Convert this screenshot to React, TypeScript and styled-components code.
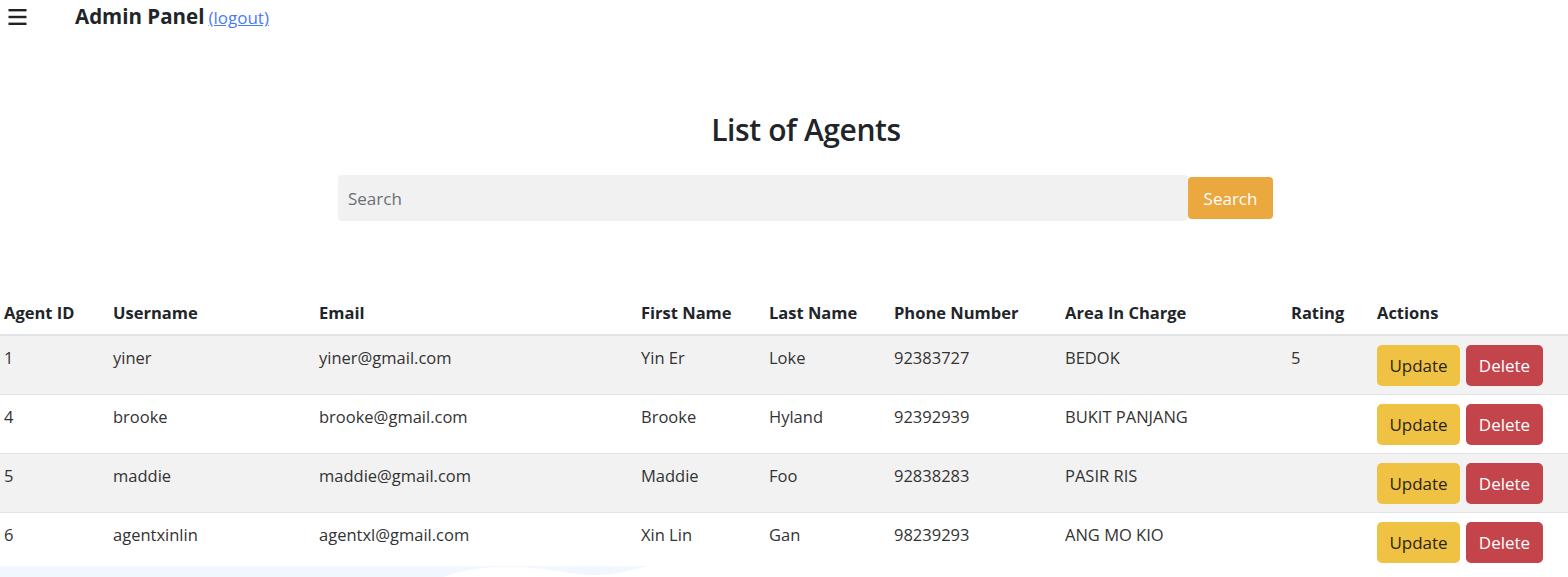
import React from "react";
import styled, { createGlobalStyle } from "styled-components";

const Global = createGlobalStyle`
  html, body { margin: 0; padding: 0; background: #fff; }
  body {
    font-family: "Open Sans", "Noto Sans", "Liberation Sans", sans-serif;
    color: #212529;
    font-size: 16px;
    overflow: hidden;
  }
  * { box-sizing: border-box; }
`;

const Page = styled.div`
  position: relative;
  width: 1568px;
  height: 577px;
  overflow: hidden;
`;

const Backdrop = styled.svg`
  position: absolute;
  left: 0;
  bottom: 0;
  z-index: 0;
`;

const Content = styled.div`
  position: relative;
  z-index: 1;
  display: flex;
  flex-direction: column;
`;

const NavBar = styled.header`
  display: flex;
  align-items: flex-start;
  height: 38px;
  padding: 0 8px;
`;

const MenuButton = styled.button`
  border: 0;
  background: none;
  padding: 0;
  margin-top: 8px;
  width: 19px;
  height: 18px;
  display: block;
  cursor: pointer;
`;

const Brand = styled.div`
  margin-left: 48px;
  padding-top: 2px;
  display: flex;
  align-items: baseline;
  gap: 4px;
  line-height: 28px;
`;

const BrandTitle = styled.span`
  font-size: 20.5px;
  font-weight: 700;
`;

const LogoutLink = styled.a`
  font-size: 17px;
  color: #4a7cf6;
  text-decoration: underline;
`;

const Heading = styled.section`
  display: flex;
  flex-direction: column;
  align-items: center;
  padding-left: 44px;
`;

const Title = styled.h2`
  margin: 72px 0 0;
  font-size: 30px;
  font-weight: 600;
  line-height: 40px;
  letter-spacing: -0.4px;
`;

const SearchRow = styled.form`
  display: flex;
  align-items: center;
  margin: 25px 0 0 -1px;
`;

const SearchInput = styled.input`
  width: 850px;
  height: 46px;
  border: 0;
  border-radius: 4px;
  background: #f1f1f1;
  padding: 0 10px;
  font-family: inherit;
  font-size: 17px;
  color: #212529;
  &::placeholder { color: #6c6f73; }
  &:focus { outline: none; }
`;

const SearchButton = styled.button`
  width: 85px;
  height: 42px;
  border: 0;
  border-radius: 4px;
  background: #eba83e;
  color: #fff;
  font-family: inherit;
  font-size: 17px;
`;

const Table = styled.table`
  margin-top: 70px;
  width: 1568px;
  border-collapse: collapse;
  table-layout: fixed;
`;

const Th = styled.th`
  text-align: left;
  font-weight: 700;
  font-size: 16.5px;
  padding: 10px 4px 9px;
  line-height: 24px;
  border-bottom: 2px solid #e2e3e5;
  white-space: nowrap;
`;

const Tr = styled.tr<{ $striped: boolean }>`
  background: ${(p) => (p.$striped ? "#f2f2f2" : "transparent")};
  border-bottom: 1px solid #e2e3e5;
  &:last-child { border-bottom: 0; }
`;

const Td = styled.td`
  padding: 9px 4px 8px;
  vertical-align: top;
  font-size: 16.5px;
  line-height: 26px;
  color: #333;
  white-space: nowrap;
`;

const Actions = styled.div`
  display: flex;
  gap: 6px;
`;

const ActionButton = styled.button<{ $variant: "update" | "delete" }>`
  height: 41px;
  padding: 0 12px;
  border: 0;
  border-radius: 5px;
  font-family: inherit;
  font-size: 17px;
  background: ${(p) => (p.$variant === "update" ? "#efc244" : "#c3444b")};
  color: ${(p) => (p.$variant === "update" ? "#2a2410" : "#fff")};
  min-width: ${(p) => (p.$variant === "update" ? "83px" : "77px")};
`;

const columns = [
  { label: "Agent ID", width: 109 },
  { label: "Username", width: 206 },
  { label: "Email", width: 322 },
  { label: "First Name", width: 128 },
  { label: "Last Name", width: 125 },
  { label: "Phone Number", width: 171 },
  { label: "Area In Charge", width: 226 },
  { label: "Rating", width: 86 },
  { label: "Actions", width: 195 },
];

const agents = [
  { id: 1, username: "yiner", email: "yiner@gmail.com", first: "Yin Er", last: "Loke", phone: "92383727", area: "BEDOK", rating: "5" },
  { id: 4, username: "brooke", email: "brooke@gmail.com", first: "Brooke", last: "Hyland", phone: "92392939", area: "BUKIT PANJANG", rating: "" },
  { id: 5, username: "maddie", email: "maddie@gmail.com", first: "Maddie", last: "Foo", phone: "92838283", area: "PASIR RIS", rating: "" },
  { id: 6, username: "agentxinlin", email: "agentxl@gmail.com", first: "Xin Lin", last: "Gan", phone: "98239293", area: "ANG MO KIO", rating: "" },
];

export default function App() {
  return (
    <>
      <Global />
      <Page>
        <Backdrop width="700" height="11" viewBox="0 0 700 11">
          <path
            d="M0,0 L650,0 C630,4 615,9 595,9 C575,9 555,3 520,1 C490,0 460,4 443,11 L0,11 Z"
            fill="#f2f6fe"
          />
        </Backdrop>
        <Content>
          <NavBar>
            <MenuButton aria-label="menu">
              <svg width="19" height="18" viewBox="0 0 19 18">
                <rect x="0.5" y="1" width="18" height="2.4" fill="#222" />
                <rect x="0.5" y="7.8" width="18" height="2.4" fill="#222" />
                <rect x="0.5" y="14.6" width="18" height="2.4" fill="#222" />
              </svg>
            </MenuButton>
            <Brand>
              <BrandTitle>Admin Panel</BrandTitle>
              <LogoutLink href="#">(logout)</LogoutLink>
            </Brand>
          </NavBar>
          <Heading>
            <Title>List of Agents</Title>
            <SearchRow onSubmit={(e) => e.preventDefault()}>
              <SearchInput placeholder="Search" />
              <SearchButton type="submit">Search</SearchButton>
            </SearchRow>
          </Heading>
          <Table>
            <colgroup>
              {columns.map((c) => (
                <col key={c.label} style={{ width: c.width }} />
              ))}
            </colgroup>
            <thead>
              <tr>
                {columns.map((c) => (
                  <Th key={c.label}>{c.label}</Th>
                ))}
              </tr>
            </thead>
            <tbody>
              {agents.map((a, i) => (
                <Tr key={a.id} $striped={i % 2 === 0}>
                  <Td>{a.id}</Td>
                  <Td>{a.username}</Td>
                  <Td>{a.email}</Td>
                  <Td>{a.first}</Td>
                  <Td>{a.last}</Td>
                  <Td>{a.phone}</Td>
                  <Td>{a.area}</Td>
                  <Td>{a.rating}</Td>
                  <Td>
                    <Actions>
                      <ActionButton $variant="update">Update</ActionButton>
                      <ActionButton $variant="delete">Delete</ActionButton>
                    </Actions>
                  </Td>
                </Tr>
              ))}
            </tbody>
          </Table>
        </Content>
      </Page>
    </>
  );
}
